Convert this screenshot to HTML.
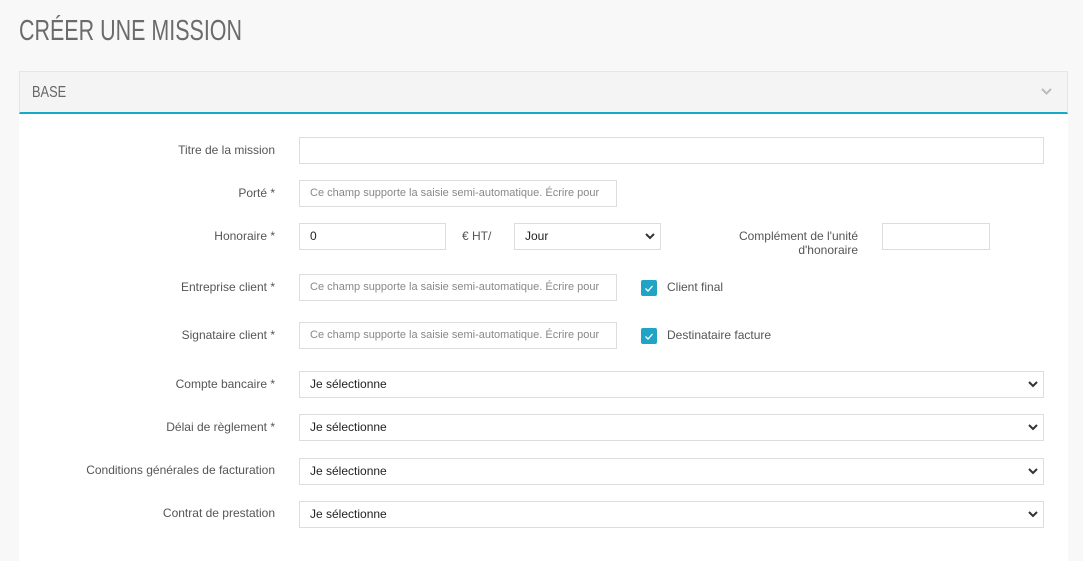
<!DOCTYPE html><html><head><meta charset="utf-8"><style>
body{margin:0;width:1083px;height:552px;background:#f8f8f8;font-family:"Liberation Sans",sans-serif;position:relative;overflow:hidden}
.a{position:absolute}
h1{position:absolute;left:19px;top:15px;margin:0;font-weight:normal;font-size:29px;color:#6b6b6b;transform:scaleX(.74);transform-origin:left;letter-spacing:0}
.panel{left:19px;top:71px;width:1049px;height:490px;background:#fff}
.hd{left:19px;top:71px;width:1047px;height:40px;background:#f4f4f4;border:1px solid #e6e6e6;border-bottom:2px solid #17a9c8}
.hd span{position:absolute;left:12px;top:12px;font-size:16px;color:#666;transform:scaleX(.8);transform-origin:left}
.l{font-size:12px;color:#555;text-align:right;width:260px;left:15px;line-height:14px}
.i{border:1px solid #ddd;background:#fff;box-sizing:border-box;height:27px;font-size:11px;color:#888;padding:0 10px;line-height:25px;white-space:nowrap;overflow:hidden}
.s{color:#222;font-size:12px}
.s svg{position:absolute;right:5px;top:9px}
.cb{width:16px;height:16px;background:#1fa4c6;border-radius:2px}
.t{font-size:12px;color:#555}
</style></head><body>
<h1>CRÉER UNE MISSION</h1>
<div class="a panel"></div>
<div class="a hd"><span>BASE</span><svg class="a" style="left:1021px;top:16px" width="11" height="7"><path d="M1 1l4.5 4.5L10 1" stroke="#bbb" stroke-width="2" fill="none"/></svg></div>

<div class="a l" style="top:143px">Titre de la mission</div>
<div class="a i" style="left:299px;top:137px;width:745px"></div>

<div class="a l" style="top:186px">Porté *</div>
<div class="a i" style="left:299px;top:180px;width:318px">Ce champ supporte la saisie semi-automatique. Écrire pour</div>

<div class="a l" style="top:229px">Honoraire *</div>
<div class="a i s" style="left:299px;top:223px;width:147px">0</div>
<div class="a t" style="left:462px;top:229px">€ HT/</div>
<div class="a i s" style="left:514px;top:223px;width:147px">Jour<svg width="10" height="7"><path d="M1 1l4 4 4-4" stroke="#333" stroke-width="2" fill="none"/></svg></div>
<div class="a t" style="left:700px;width:158px;text-align:right;top:229px;line-height:14px">Complément de l'unité<br>d'honoraire</div>
<div class="a i" style="left:882px;top:223px;width:108px"></div>

<div class="a l" style="top:280px">Entreprise client *</div>
<div class="a i" style="left:299px;top:274px;width:318px">Ce champ supporte la saisie semi-automatique. Écrire pour</div>
<div class="a cb" style="left:641px;top:280px"><svg width="16" height="16"><path d="M4.5 8.5l2.5 2.5 4.5-5" stroke="#fff" stroke-width="1.3" fill="none"/></svg></div>
<div class="a t" style="left:667px;top:280px">Client final</div>

<div class="a l" style="top:328px">Signataire client *</div>
<div class="a i" style="left:299px;top:322px;width:318px">Ce champ supporte la saisie semi-automatique. Écrire pour</div>
<div class="a cb" style="left:641px;top:328px"><svg width="16" height="16"><path d="M4.5 8.5l2.5 2.5 4.5-5" stroke="#fff" stroke-width="1.3" fill="none"/></svg></div>
<div class="a t" style="left:667px;top:328px">Destinataire facture</div>

<div class="a l" style="top:377px">Compte bancaire *</div>
<div class="a i s" style="left:299px;top:371px;width:745px">Je sélectionne<svg width="10" height="7"><path d="M1 1l4 4 4-4" stroke="#333" stroke-width="2" fill="none"/></svg></div>
<div class="a l" style="top:420px">Délai de règlement *</div>
<div class="a i s" style="left:299px;top:414px;width:745px">Je sélectionne<svg width="10" height="7"><path d="M1 1l4 4 4-4" stroke="#333" stroke-width="2" fill="none"/></svg></div>
<div class="a l" style="top:463px">Conditions générales de facturation</div>
<div class="a i s" style="left:299px;top:458px;width:745px">Je sélectionne<svg width="10" height="7"><path d="M1 1l4 4 4-4" stroke="#333" stroke-width="2" fill="none"/></svg></div>
<div class="a l" style="top:506px">Contrat de prestation</div>
<div class="a i s" style="left:299px;top:501px;width:745px">Je sélectionne<svg width="10" height="7"><path d="M1 1l4 4 4-4" stroke="#333" stroke-width="2" fill="none"/></svg></div>
</body></html>
